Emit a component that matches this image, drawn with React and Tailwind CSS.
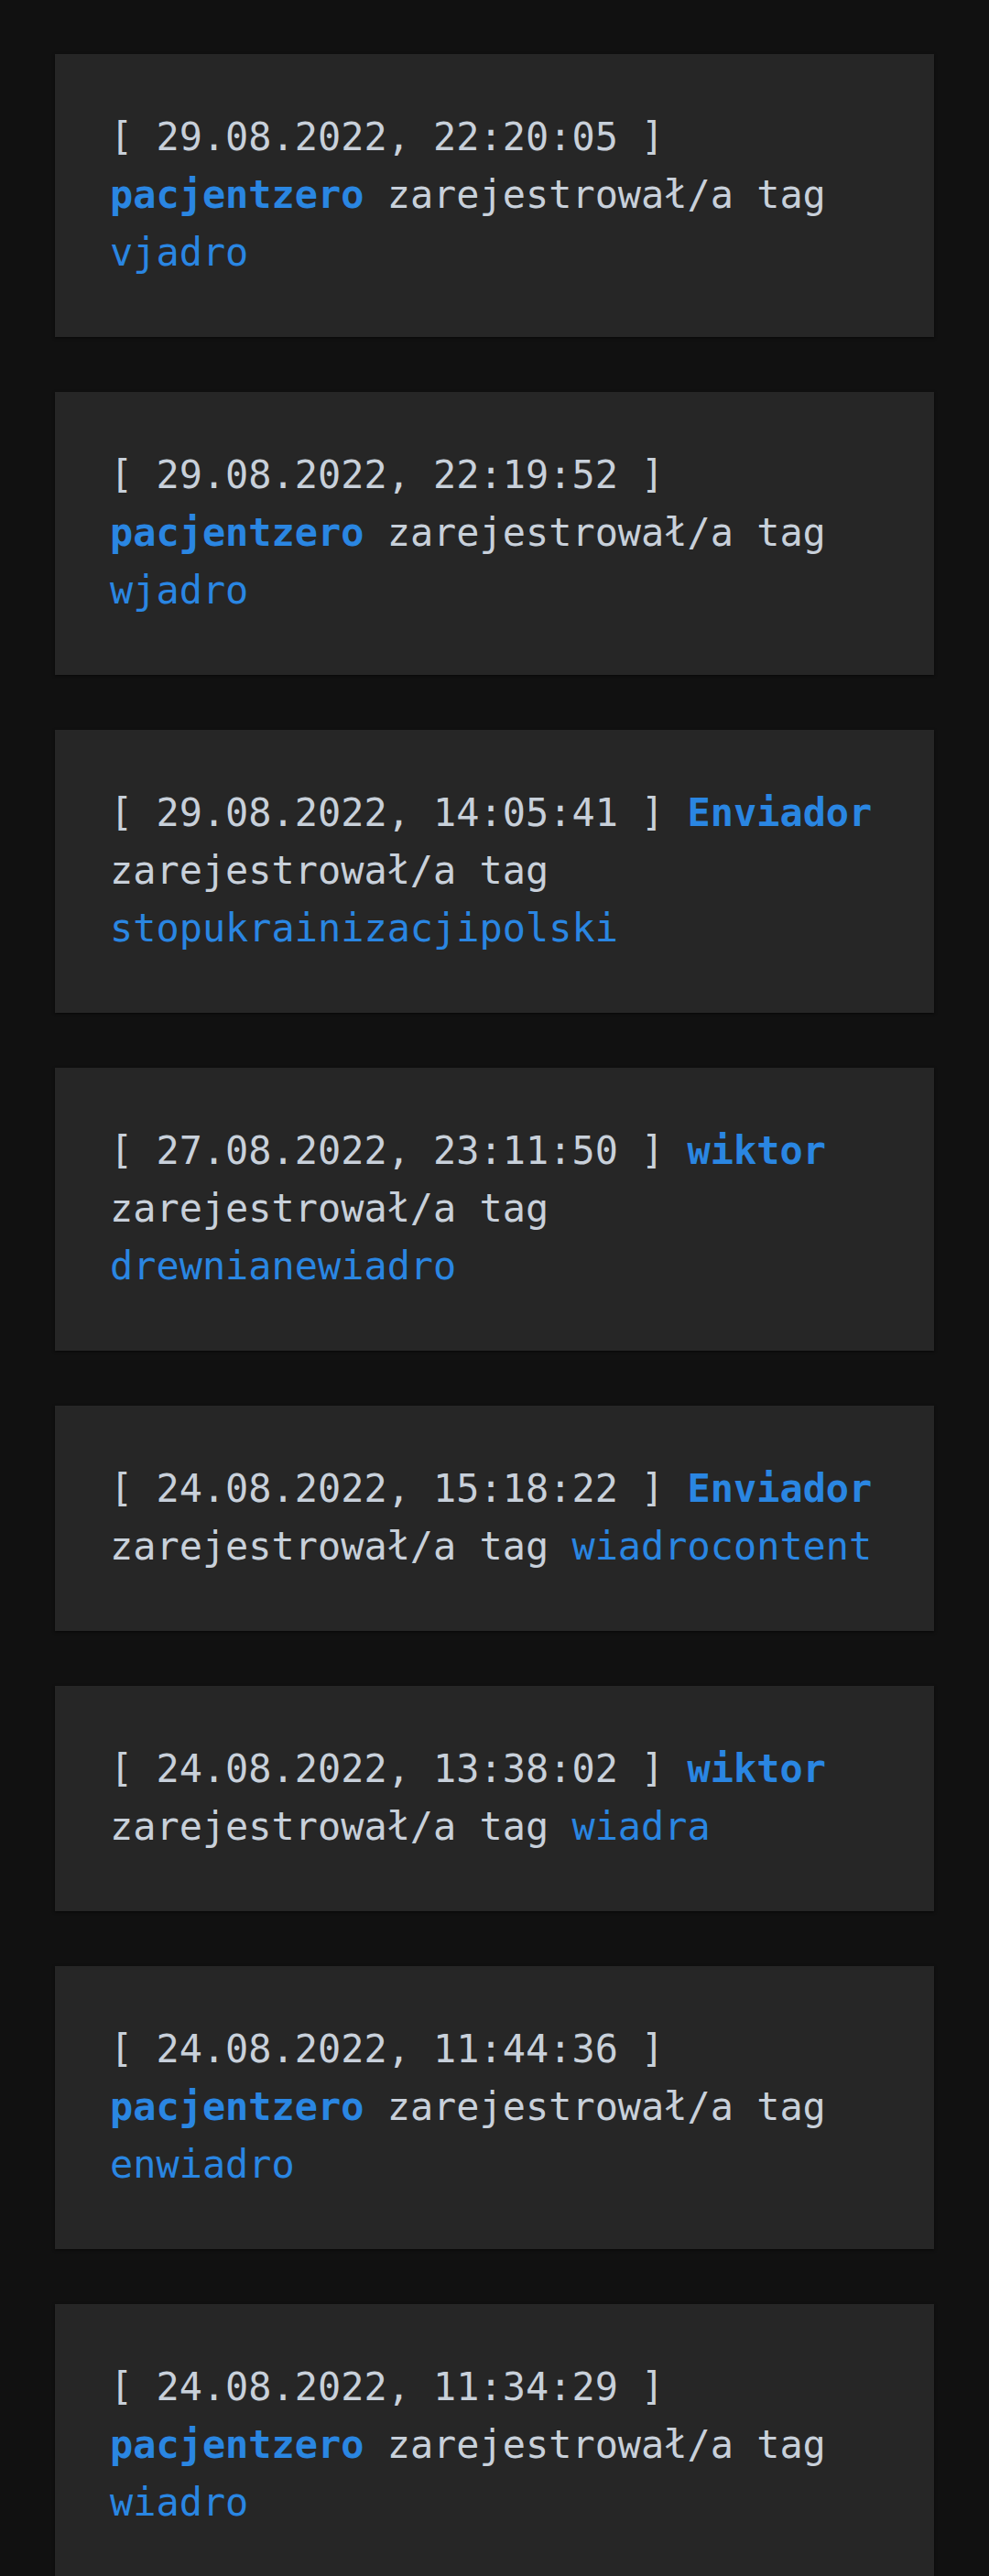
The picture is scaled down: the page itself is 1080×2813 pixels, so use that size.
import React from "react";

const entries = [
  { date: "29.08.2022, 22:20:05", user: "pacjentzero", tag: "vjadro" },
  { date: "29.08.2022, 22:19:52", user: "pacjentzero", tag: "wjadro" },
  { date: "29.08.2022, 14:05:41", user: "Enviador", tag: "stopukrainizacjipolski" },
  { date: "27.08.2022, 23:11:50", user: "wiktor", tag: "drewnianewiadro" },
  { date: "24.08.2022, 15:18:22", user: "Enviador", tag: "wiadrocontent" },
  { date: "24.08.2022, 13:38:02", user: "wiktor", tag: "wiadra" },
  { date: "24.08.2022, 11:44:36", user: "pacjentzero", tag: "enwiadro" },
  { date: "24.08.2022, 11:34:29", user: "pacjentzero", tag: "wiadro" },
];

const App = () => {
  return (
    <div className="min-h-screen bg-[#111111] px-[60px] pt-[59px] pb-[60px] font-['DejaVu_Sans_Mono',monospace]">
      {/* Log entries */}
      <div className="flex flex-col gap-[60px]">
        {entries.map((item, i) => (
          <div
            key={i}
            className="bg-[#262626] px-[60px] pt-[59px] pb-[61px] text-[41.9px] leading-[63px] text-[#c8d0da] shadow-[0_1px_3px_rgba(0,0,0,0.6)]"
          >
            [ {item.date} ]{" "}
            <span className="font-bold text-[#2a86e2]">{item.user}</span> zarejestrował/a tag{" "}
            <span className="text-[#2a86e2]">{item.tag}</span>
          </div>
        ))}
      </div>
    </div>
  );
};

export default App;
